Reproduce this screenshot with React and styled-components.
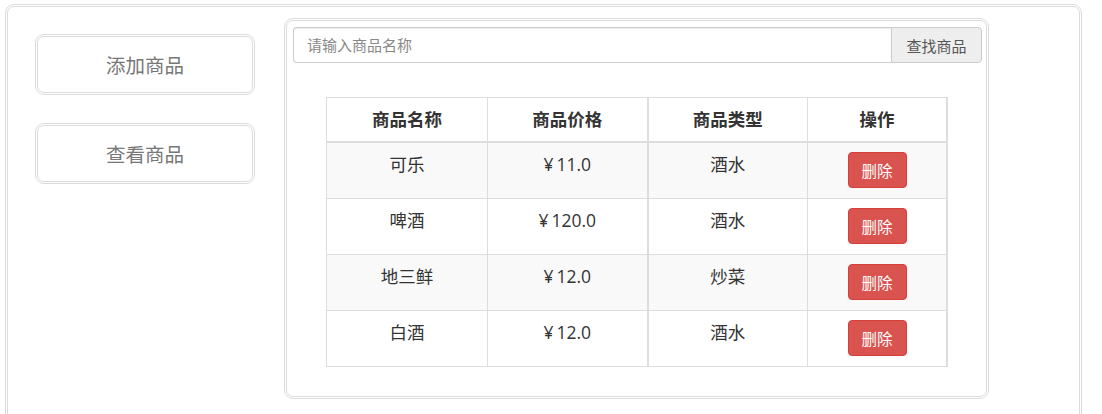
import React from "react";
import styled, { createGlobalStyle } from "styled-components";

const goods = [
  { name: "可乐", price: "11.0", type: "酒水" },
  { name: "啤酒", price: "120.0", type: "酒水" },
  { name: "地三鲜", price: "12.0", type: "炒菜" },
  { name: "白酒", price: "12.0", type: "酒水" },
];

const App = () => {
  return (
    <>
      <GlobalStyle />
      <Frame>
        <SideMenu>
          <MenuButton>添加商品</MenuButton>
          <MenuButton>查看商品</MenuButton>
        </SideMenu>
        <Panel>
          <SearchGroup>
            <SearchInput placeholder="请输入商品名称" />
            <SearchButton>查找商品</SearchButton>
          </SearchGroup>
          <Table>
            <thead>
              <tr>
                <Th>商品名称</Th>
                <Th>商品价格</Th>
                <Th $thick>商品类型</Th>
                <Th>操作</Th>
              </tr>
            </thead>
            <tbody>
              {goods.map((item, i) => (
                <Row key={i} $striped={i % 2 === 0}>
                  <Td>{item.name}</Td>
                  <Td>
                    <Currency>¥</Currency>
                    {item.price}
                  </Td>
                  <Td $thick>{item.type}</Td>
                  <Td>
                    <DeleteButton>删除</DeleteButton>
                  </Td>
                </Row>
              ))}
            </tbody>
          </Table>
        </Panel>
      </Frame>
    </>
  );
};

export default App;

const GlobalStyle = createGlobalStyle`
  * {
    box-sizing: border-box;
  }
  body {
    margin: 0;
    background: #fff;
    font-family: "Open Sans", "Noto Sans CJK SC", sans-serif;
    color: #333;
    overflow: hidden;
  }
`;

const Frame = styled.div`
  display: flex;
  align-items: flex-start;
  gap: 29px;
  width: 1077px;
  height: 430px;
  margin: 4px 0 0 5px;
  padding: 11px 0 0 27px;
  border: 3px double #dcdcdc;
  border-radius: 9px;
`;

const SideMenu = styled.div`
  display: flex;
  flex-direction: column;
  gap: 28px;
  margin-top: 16px;
  width: 220px;
`;

const MenuButton = styled.div`
  display: flex;
  align-items: center;
  justify-content: center;
  height: 61px;
  border: 3px double #dcdcdc;
  border-radius: 9px;
  font-size: 19.5px;
  color: #777;
  cursor: pointer;
`;

const Panel = styled.div`
  width: 705px;
  height: 381px;
  padding: 6px 4px 0 6px;
  border: 3px double #dcdcdc;
  border-radius: 9px;
`;

const SearchGroup = styled.div`
  display: flex;
  height: 36px;
`;

const SearchInput = styled.input`
  flex: 1;
  height: 36px;
  padding: 0 13px;
  border: 1px solid #ccc;
  border-right: none;
  border-radius: 4px 0 0 4px;
  font-family: inherit;
  font-size: 15px;
  color: #555;
  outline: none;
  box-shadow: inset 0 1px 1px rgba(0, 0, 0, 0.075);

  &::placeholder {
    color: #888;
  }
`;

const SearchButton = styled.button`
  width: 91px;
  height: 36px;
  border: 1px solid #ccc;
  border-radius: 0 4px 4px 0;
  background: #eee;
  font-family: inherit;
  font-size: 15px;
  color: #555;
  cursor: pointer;
`;

const Table = styled.table`
  width: 622px;
  margin: 34px 0 0 33px;
  border-collapse: collapse;
  border: 1px solid #ddd;
  border-right-width: 2px;
  table-layout: fixed;

  & th:nth-child(1),
  & td:nth-child(1) {
    width: 161px;
  }
  & th:nth-child(2),
  & td:nth-child(2) {
    width: 160px;
  }
  & th:nth-child(3),
  & td:nth-child(3) {
    width: 160px;
  }
`;

const Th = styled.th`
  height: 44px;
  padding: 9px 10px;
  border: 1px solid #ddd;
  border-bottom-width: 2px;
  border-left-width: ${(p) => (p.$thick ? "2px" : "1px")};
  font-size: 17.5px;
  font-weight: 700;
  line-height: 25px;
  text-align: center;
  color: #333;
`;

const Row = styled.tr`
  background: ${(p) => (p.$striped ? "#f9f9f9" : "#fff")};
`;

const Td = styled.td`
  height: 56px;
  padding: 9px 10px 10px;
  border: 1px solid #ddd;
  border-left-width: ${(p) => (p.$thick ? "2px" : "1px")};
  font-size: 17.5px;
  line-height: 25px;
  text-align: center;
  vertical-align: top;
  color: #333;
`;

const Currency = styled.span`
  margin-right: 3px;
`;

const DeleteButton = styled.button`
  width: 59px;
  height: 36px;
  padding: 0;
  border: 1px solid #d43f3a;
  border-radius: 4px;
  background: #d9534f;
  font-family: inherit;
  font-size: 15.5px;
  color: #fff;
  cursor: pointer;
`;
